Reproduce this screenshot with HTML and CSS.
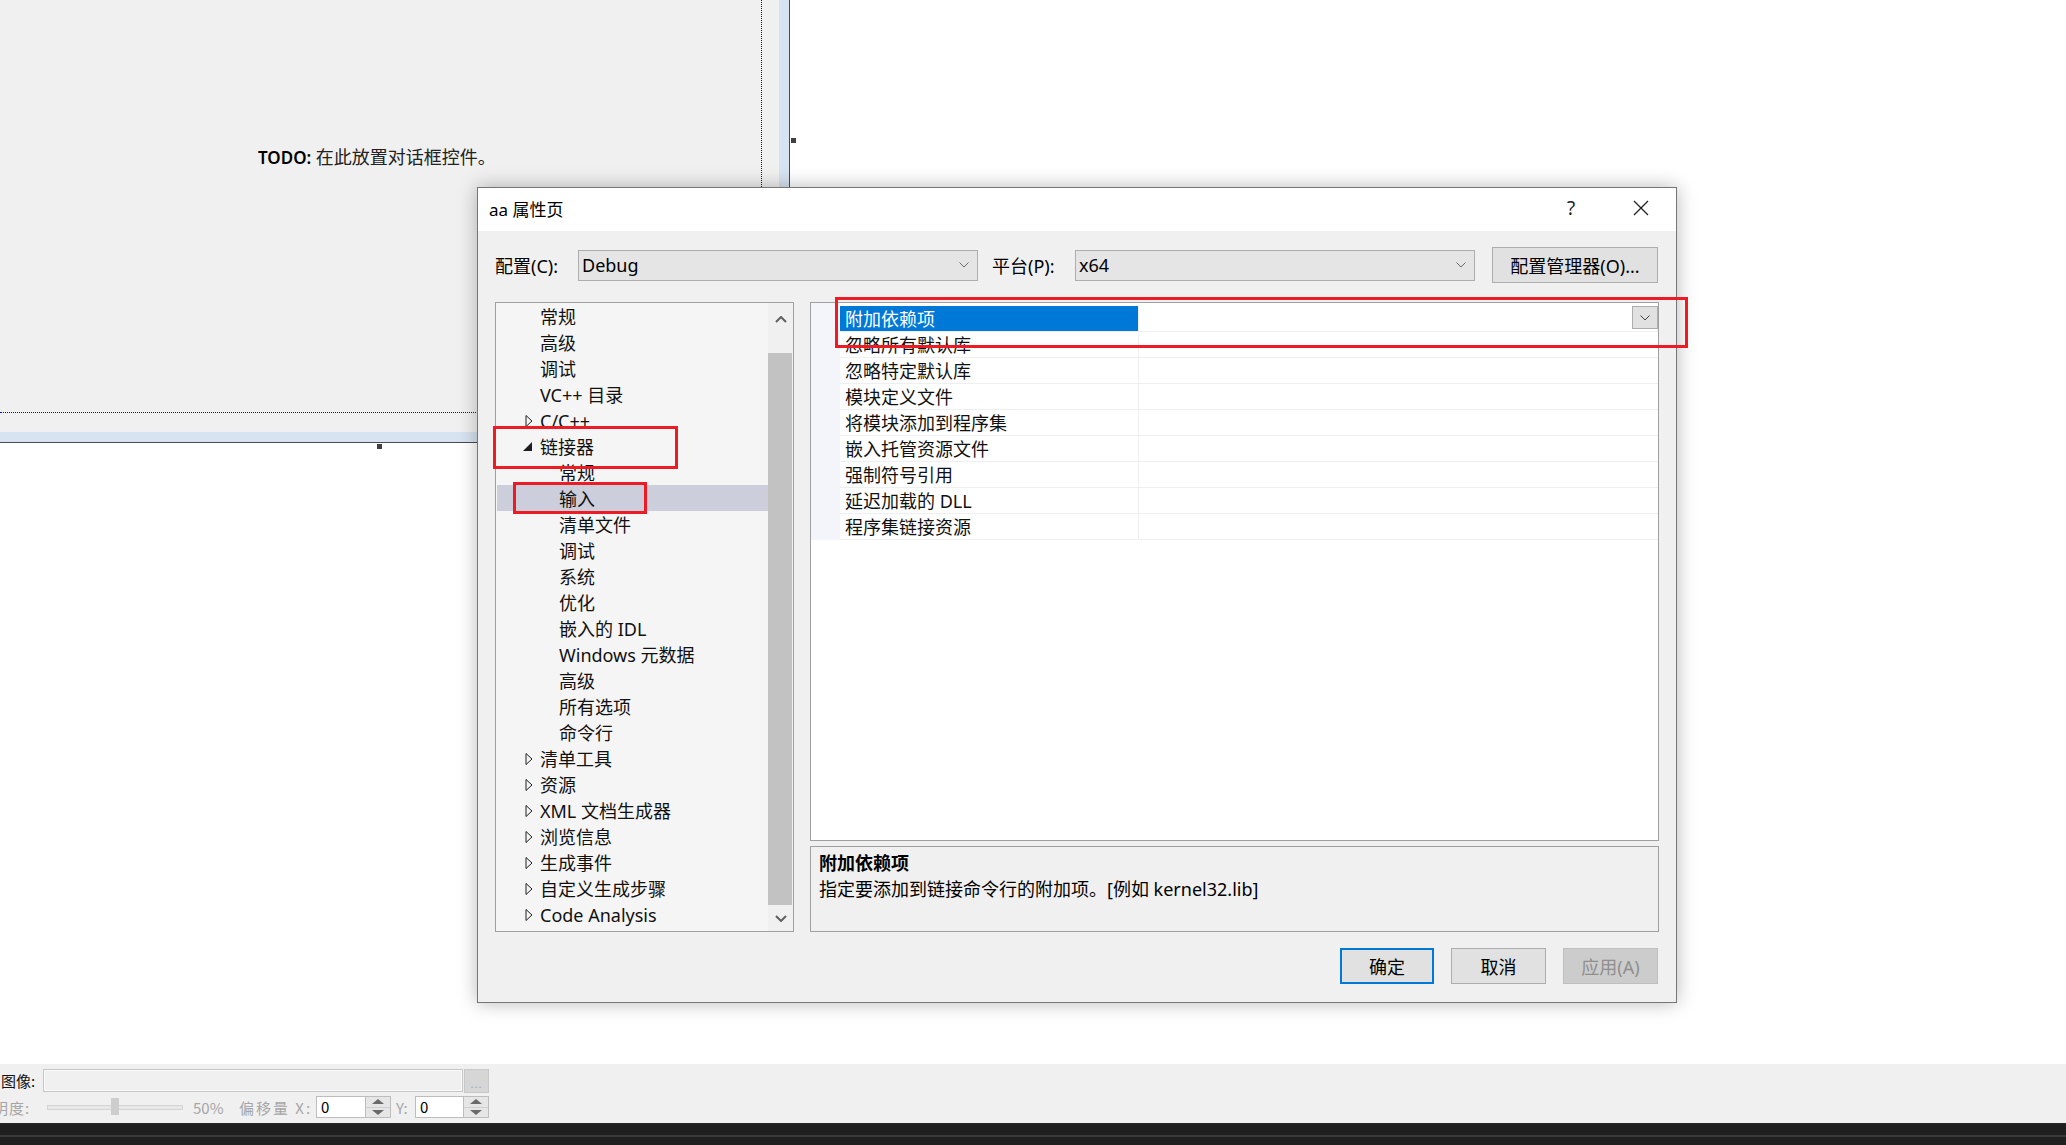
FILE: index.html
```html
<!DOCTYPE html>
<html lang="zh-CN">
<head>
<meta charset="utf-8">
<title>aa 属性页</title>
<link rel="stylesheet" href="styles.css">
</head>
<body>
<div class="workspace">
  <div class="designer">
    <div class="form">
      <div class="guides">
        <p class="todo"><span class="todo-key">TODO:</span> <span class="todo-cn">在此放置对话框控件。</span></p>
      </div>
    </div>
  </div>
  <span class="handle handle-right"></span>
  <span class="handle handle-bottom"></span>

  <div class="dialog">
    <div class="titlebar">
      <span class="title">aa 属性页</span>
      <span class="help">?</span>
      <span class="close"><svg width="16" height="16" viewBox="0 0 16 16"><path d="M1 1L15 15M15 1L1 15" stroke="#1a1a1a" stroke-width="1.2" fill="none"/></svg></span>
    </div>
    <div class="dlg-body">
      <div class="toolbar">
        <span class="lbl">配置(C):</span>
        <div class="combo"><span class="combo-text">Debug</span><svg class="chev" width="10" height="6" viewBox="0 0 10 6"><path d="M0.5 0.5L5 5L9.5 0.5" stroke="#6a6a6a" fill="none"/></svg></div>
        <span class="lbl lbl-platform">平台(P):</span>
        <div class="combo"><span class="combo-text">x64</span><svg class="chev" width="10" height="6" viewBox="0 0 10 6"><path d="M0.5 0.5L5 5L9.5 0.5" stroke="#6a6a6a" fill="none"/></svg></div>
        <button class="btn btn-manager">配置管理器(O)...</button>
      </div>

      <div class="main">
        <div class="tree">
          <div class="tree-list">
            <div class="trow">常规</div>
            <div class="trow">高级</div>
            <div class="trow">调试</div>
            <div class="trow">VC++ 目录</div>
            <div class="trow"><svg class="twisty" width="8" height="12" viewBox="0 0 8 12"><path d="M1 0.5L7 6L1 11.5Z" fill="none" stroke="#1e1e1e"/></svg>C/C++</div>
            <div class="trow"><svg class="twisty twisty-open" width="9" height="9" viewBox="0 0 9 9"><path d="M9 0L9 9L0 9Z" fill="#1e1e1e"/></svg>链接器</div>
            <div class="trow child">常规</div>
            <div class="trow child selected">输入</div>
            <div class="trow child">清单文件</div>
            <div class="trow child">调试</div>
            <div class="trow child">系统</div>
            <div class="trow child">优化</div>
            <div class="trow child">嵌入的 IDL</div>
            <div class="trow child">Windows 元数据</div>
            <div class="trow child">高级</div>
            <div class="trow child">所有选项</div>
            <div class="trow child">命令行</div>
            <div class="trow"><svg class="twisty" width="8" height="12" viewBox="0 0 8 12"><path d="M1 0.5L7 6L1 11.5Z" fill="none" stroke="#1e1e1e"/></svg>清单工具</div>
            <div class="trow"><svg class="twisty" width="8" height="12" viewBox="0 0 8 12"><path d="M1 0.5L7 6L1 11.5Z" fill="none" stroke="#1e1e1e"/></svg>资源</div>
            <div class="trow"><svg class="twisty" width="8" height="12" viewBox="0 0 8 12"><path d="M1 0.5L7 6L1 11.5Z" fill="none" stroke="#1e1e1e"/></svg>XML 文档生成器</div>
            <div class="trow"><svg class="twisty" width="8" height="12" viewBox="0 0 8 12"><path d="M1 0.5L7 6L1 11.5Z" fill="none" stroke="#1e1e1e"/></svg>浏览信息</div>
            <div class="trow"><svg class="twisty" width="8" height="12" viewBox="0 0 8 12"><path d="M1 0.5L7 6L1 11.5Z" fill="none" stroke="#1e1e1e"/></svg>生成事件</div>
            <div class="trow"><svg class="twisty" width="8" height="12" viewBox="0 0 8 12"><path d="M1 0.5L7 6L1 11.5Z" fill="none" stroke="#1e1e1e"/></svg>自定义生成步骤</div>
            <div class="trow"><svg class="twisty" width="8" height="12" viewBox="0 0 8 12"><path d="M1 0.5L7 6L1 11.5Z" fill="none" stroke="#1e1e1e"/></svg>Code Analysis</div>
          </div>
          <div class="vscroll">
            <div class="sb-btn"><svg width="12" height="7" viewBox="0 0 12 7"><path d="M1 6L6 1L11 6" stroke="#606060" stroke-width="2" fill="none"/></svg></div>
            <div class="sb-gap"></div>
            <div class="sb-thumb"></div>
            <div class="sb-btn sb-down"><svg width="12" height="7" viewBox="0 0 12 7"><path d="M1 1L6 6L11 1" stroke="#606060" stroke-width="2" fill="none"/></svg></div>
          </div>
        </div>

        <div class="right">
          <div class="grid">
            <div class="prows">
              <div class="prow selected"><span class="gutter"></span><span class="pname">附加依赖项</span><span class="pval"><span class="dd-btn"><svg width="10" height="6" viewBox="0 0 10 6"><path d="M0.5 0.5L5 5L9.5 0.5" stroke="#444" fill="none"/></svg></span></span></div>
              <div class="prow"><span class="gutter"></span><span class="pname">忽略所有默认库</span><span class="pval"></span></div>
              <div class="prow"><span class="gutter"></span><span class="pname">忽略特定默认库</span><span class="pval"></span></div>
              <div class="prow"><span class="gutter"></span><span class="pname">模块定义文件</span><span class="pval"></span></div>
              <div class="prow"><span class="gutter"></span><span class="pname">将模块添加到程序集</span><span class="pval"></span></div>
              <div class="prow"><span class="gutter"></span><span class="pname">嵌入托管资源文件</span><span class="pval"></span></div>
              <div class="prow"><span class="gutter"></span><span class="pname">强制符号引用</span><span class="pval"></span></div>
              <div class="prow"><span class="gutter"></span><span class="pname">延迟加载的 DLL</span><span class="pval"></span></div>
              <div class="prow"><span class="gutter"></span><span class="pname">程序集链接资源</span><span class="pval"></span></div>
            </div>
          </div>
          <div class="desc">
            <div class="desc-title">附加依赖项</div>
            <div>指定要添加到链接命令行的附加项。[例如 kernel32.lib]</div>
          </div>
        </div>
      </div>

      <div class="actions">
        <button class="btn btn-ok">确定</button>
        <button class="btn btn-cancel">取消</button>
        <button class="btn btn-disabled">应用(A)</button>
      </div>
    </div>
  </div>

  <div class="annot annot-linker"></div>
  <div class="annot annot-input"></div>
  <div class="annot annot-prop"></div>
</div>

<div class="propbar">
  <div class="pb-row">
    <span class="pb-label">图像:</span>
    <span class="pb-input"></span>
    <span class="pb-browse">...</span>
  </div>
  <div class="pb-row pb-row2">
    <span class="pb-label2">透明度:</span>
    <span class="slider"><span class="slider-track"></span><span class="slider-thumb"></span></span>
    <span class="pb-pct">50%</span>
    <span class="pb-offset">偏移量 X:</span>
    <span class="spin"><span class="spin-val">0</span><span class="spin-btns"><span class="spin-up"></span><span class="spin-down"></span></span></span>
    <span class="pb-y">Y:</span>
    <span class="spin spin2"><span class="spin-val">0</span><span class="spin-btns"><span class="spin-up"></span><span class="spin-down"></span></span></span>
  </div>
</div>
<div class="statusbar"></div>
</body>
</html>
```

FILE: styles.css
```css
* { box-sizing: border-box; }
html, body { margin: 0; padding: 0; }
body {
  width: 2066px;
  height: 1145px;
  overflow: hidden;
  background: #fff;
  font-family: "Noto Sans", "Noto Sans CJK SC", sans-serif;
  color: #000;
}

/* ---------- designer canvas ---------- */
.workspace { position: relative; height: 1064px; background: #fff; }
.designer {
  width: 790px;
  height: 443px;
  border-right: 1px solid #4a4a4a;
  border-bottom: 1px solid #4a4a4a;
  background: #d7e3f0;
  padding: 0 10px 10px 0;
}
.form { height: 100%; background: #f0f0f0; }
.guides {
  width: 762px;
  height: 413px;
  border-right: 1px dotted #0000ff;
  border-bottom: 1px dotted #0000ff;
}
.todo {
  margin: 0;
  padding: 147px 0 0 258px;
  font-family: "Noto Sans", "Noto Sans CJK SC", sans-serif;
  font-size: 17px;
  line-height: 20px;
  white-space: nowrap;
  color: #111;
}
.todo-key { font-weight: 600; color: #000; }
.todo-cn { font-size: 18px; color: #222; }
.handle { position: absolute; width: 5px; height: 5px; background: #404040; }
.handle-right { left: 791px; top: 138px; }
.handle-bottom { left: 377px; top: 444px; }

/* ---------- dialog ---------- */
.dialog {
  position: absolute;
  left: 477px;
  top: 187px;
  width: 1200px;
  height: 816px;
  background: #f0f0f0;
  border: 1px solid #767676;
  box-shadow: 0 0 18px rgba(0, 0, 0, 0.28);
  display: flex;
  flex-direction: column;
}
.titlebar {
  height: 43px;
  flex: none;
  background: #fff;
  display: flex;
  align-items: center;
  padding: 0 0 3px 11px;
  font-size: 17px;
}
.title { flex: 1; white-space: nowrap; }
.help {
  width: 20px;
  text-align: center;
  font-size: 19px;
  color: #222;
  margin-right: 52px;
}
.close { width: 16px; height: 16px; margin-right: 27px; display: flex; }

.dlg-body {
  flex: 1;
  padding: 16px 17px 0 17px;
  display: flex;
  flex-direction: column;
}
.toolbar { display: flex; align-items: center; height: 36px; }
.lbl { width: 64px; margin-right: 19px; font-size: 18px; white-space: nowrap; }
.lbl-platform { margin-left: 14px; }
.combo {
  width: 400px;
  height: 31px;
  background: #e5e5e5;
  border: 1px solid #adadad;
  display: flex;
  align-items: center;
  padding: 0 8px 0 3px;
  font-size: 18px;
}
.combo-text { flex: 1; }
.btn {
  font-family: "Noto Sans", "Noto Sans CJK SC", sans-serif;
  font-size: 18px;
  background: #e1e1e1;
  border: 1px solid #adadad;
  color: #000;
  padding: 0;
  height: 36px;
  width: 95px;
}
.btn-manager { width: 166px; margin-left: 17px; white-space: nowrap; }

.main { margin-top: 19px; height: 630px; display: flex; gap: 16px; }

/* tree */
.tree {
  width: 299px;
  border: 1px solid #a0a0a0;
  background: #f5f5f5;
  display: flex;
  overflow: hidden;
}
.tree-list { flex: 1; }
.trow {
  position: relative;
  height: 26px;
  line-height: 28px;
  font-size: 18px;
  white-space: nowrap;
  padding-left: 44px;
  color: #111;
}
.trow.child { padding-left: 63px; }
.trow.selected { background: #cccedb; margin-left: 1px; padding-left: 62px; }
.twisty { position: absolute; left: 29px; top: 8px; }
.twisty-open { left: 27px; top: 9px; }
.vscroll { width: 25px; background: #f0f0f0; display: flex; flex-direction: column; }
.sb-btn { height: 33px; display: flex; align-items: center; justify-content: center; }
.sb-gap { height: 17px; }
.sb-thumb { flex: 1; background: #c2c2c2; margin-right: 1px; }
.sb-down { height: 26px; }

/* property grid */
.right { width: 849px; display: flex; flex-direction: column; gap: 5px; }
.grid { height: 539px; border: 1px solid #a0a0a0; background: #fff; }
.prows {
  padding-top: 3px;
  background: linear-gradient(to right, #f3f5fa 29px, #fff 29px);
}
.prow { display: flex; height: 26px; }
.gutter { width: 29px; flex: none; }
.pname {
  width: 299px;
  flex: none;
  padding: 2px 0 0 5px;
  font-size: 18px;
  line-height: 23px;
  white-space: nowrap;
  border-bottom: 1px solid #eeeff3;
  border-right: 1px solid #eeeff3;
  background: #fff;
  color: #111;
}
.pval { flex: 1; display: flex; border-bottom: 1px solid #eeeff3; background: #fff; }
.prow.selected .pname { background: #0078d7; color: #fff; }
.dd-btn {
  margin-left: auto;
  width: 26px;
  height: 23px;
  background: #e1e1e1;
  border: 1px solid #adadad;
  display: flex;
  align-items: center;
  justify-content: center;
}
.desc {
  flex: 1;
  border: 1px solid #a0a0a0;
  background: #f0f0f0;
  padding: 3px 8px;
  font-size: 18px;
  line-height: 26px;
  white-space: nowrap;
}
.desc-title { font-weight: 700; }

.actions { margin-top: 16px; height: 36px; display: flex; justify-content: flex-end; gap: 17px; padding-right: 1px; }
.btn-ok { width: 94px; border: 2px solid #0078d7; }
.btn-disabled { background: #cccccc; border-color: #bfbfbf; color: #8f8f8f; }

/* annotations */
.annot { position: absolute; border: 3px solid #ed1c24; }
.annot-linker { left: 493px; top: 426px; width: 185px; height: 43px; }
.annot-input { left: 513px; top: 482px; width: 134px; height: 32px; }
.annot-prop { left: 835px; top: 297px; width: 853px; height: 51px; }

/* ---------- bottom property bar ---------- */
.propbar {
  height: 59px;
  background: #f0f0f0;
  padding-top: 5px;
  font-family: "Noto Sans CJK SC", sans-serif;
  font-size: 15px;
}
.pb-row { display: flex; align-items: center; height: 23px; white-space: nowrap; }
.pb-row2 { margin-top: 4px; height: 22px; color: #a6a6a6; }
.pb-label { width: 43px; padding-left: 1px; color: #111; }
.pb-input {
  width: 420px;
  height: 23px;
  border: 1px solid #c6c6c6;
  background: #f0f0f0;
  box-shadow: inset 0 0 0 1px #fafafa;
}
.pb-browse {
  width: 25px;
  height: 24px;
  margin-left: 1px;
  background: #d6d6d6;
  border: 1px solid #c8c8c8;
  color: #a8a8a8;
  font-size: 11px;
  line-height: 26px;
  text-align: center;
  letter-spacing: 1px;
}
.pb-label2 { width: 70px; margin-left: -23px; letter-spacing: 1px; }
.slider { position: relative; width: 136px; height: 22px; display: flex; align-items: center; }
.slider-track { width: 136px; height: 5px; border: 1px solid #d4d4d4; background: #e8e8e8; }
.slider-thumb { position: absolute; left: 64px; top: 2px; width: 8px; height: 17px; background: #cdcdcd; }
.pb-pct { width: 56px; padding-left: 10px; }
.pb-offset { width: 77px; letter-spacing: 2px; }
.spin {
  width: 75px;
  height: 22px;
  border: 1px solid #bdbdbd;
  background: #fff;
  display: flex;
}
.spin2 { width: 74px; }
.spin-val { flex: 1; padding-left: 4px; color: #000; line-height: 20px; font-size: 15px; }
.spin-btns {
  width: 25px;
  display: flex;
  flex-direction: column;
  background: #e6e6e6;
  border-left: 1px solid #bdbdbd;
}
.spin-up, .spin-down { flex: 1; display: flex; align-items: center; justify-content: center; }
.spin-up { border-bottom: 1px solid #cfcfcf; }
.spin-up::before {
  content: "";
  border-left: 6px solid transparent;
  border-right: 6px solid transparent;
  border-bottom: 5px solid #6a6a6a;
}
.spin-down::before {
  content: "";
  border-left: 6px solid transparent;
  border-right: 6px solid transparent;
  border-top: 5px solid #6a6a6a;
}
.pb-y { width: 24px; padding-left: 5px; }

.statusbar {
  height: 22px;
  background: linear-gradient(to bottom, #2a2a2a 0, #1f1f1f 2px, #1f1f1f 12px, #3a3a3a 12px, #3a3a3a 14px, #1f1f1f 14px);
}
```
